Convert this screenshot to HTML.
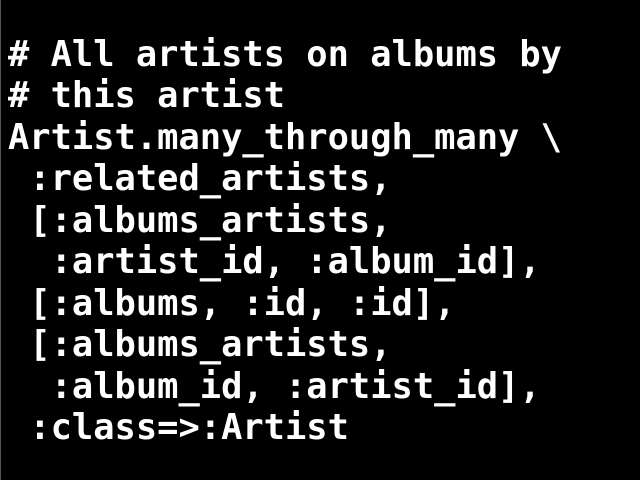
<!DOCTYPE html>
<html><head><style>
html,body{margin:0;padding:0;background:#000;}
body{width:640px;height:480px;overflow:hidden;position:relative;border-left:1px solid #555;box-sizing:border-box;}
pre{position:absolute;left:7px;top:34px;margin:0;font-family:"DejaVu Sans Mono","Liberation Mono",monospace;font-weight:bold;font-size:35.4px;line-height:41.45px;color:#fff;}
</style></head><body>
<pre># All artists on albums by
# this artist
Artist.many_through_many \
 :related_artists,
 [:albums_artists,
  :artist_id, :album_id],
 [:albums, :id, :id],
 [:albums_artists,
  :album_id, :artist_id],
 :class=&gt;:Artist</pre>
</body></html>
